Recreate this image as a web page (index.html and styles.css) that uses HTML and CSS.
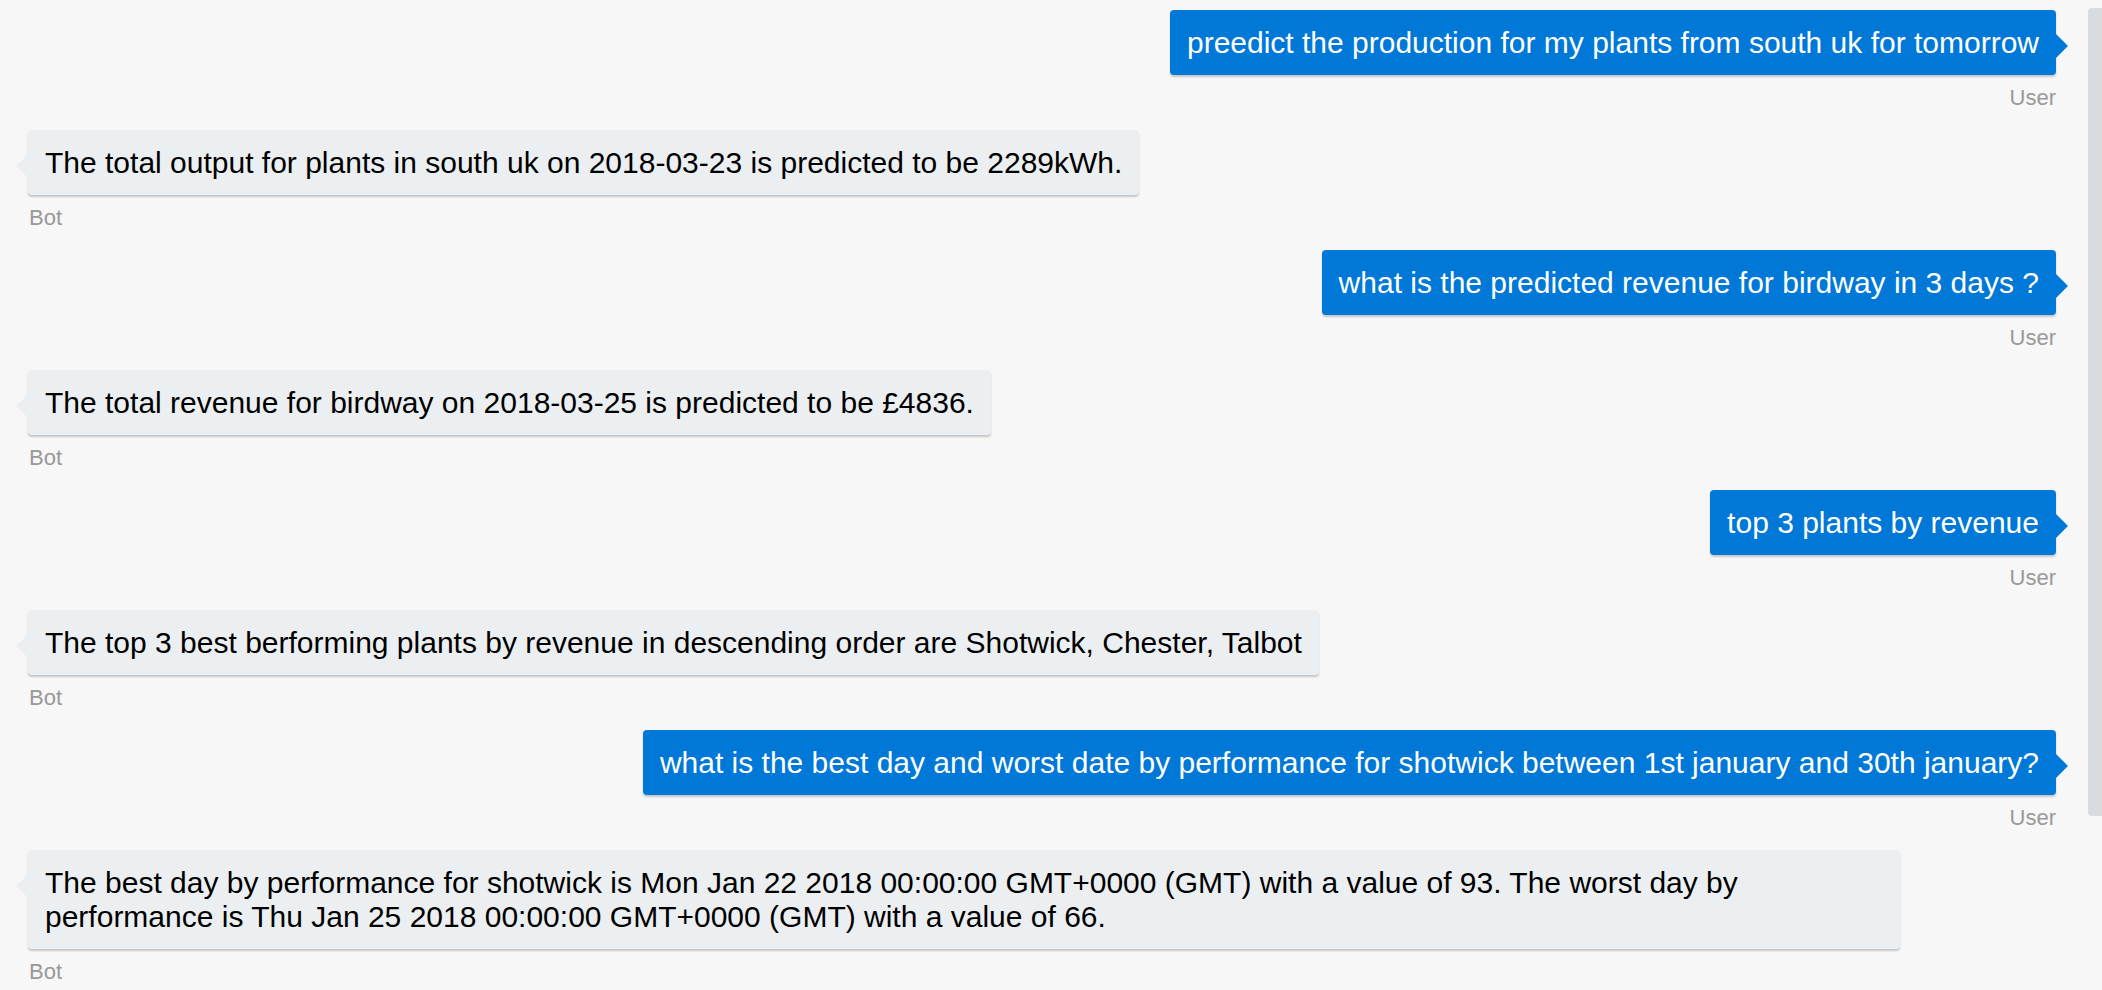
FILE: index.html
```html
<!DOCTYPE html>
<html lang="en">
<head>
<meta charset="utf-8">
<title>Chat</title>
<link rel="stylesheet" href="styles.css">
</head>
<body>
<div class="app">
  <div class="chat">
    <div class="msg msg-user">
      <div class="bubble-wrap"><div class="bubble">preedict the production for my plants from south uk for tomorrow</div></div>
      <div class="from">User</div>
    </div>
    <div class="msg msg-bot">
      <div class="bubble-wrap"><div class="bubble">The total output for plants in south uk on 2018-03-23 is predicted to be 2289kWh.</div></div>
      <div class="from">Bot</div>
    </div>
    <div class="msg msg-user">
      <div class="bubble-wrap"><div class="bubble">what is the predicted revenue for birdway in 3 days ?</div></div>
      <div class="from">User</div>
    </div>
    <div class="msg msg-bot">
      <div class="bubble-wrap"><div class="bubble">The total revenue for birdway on 2018-03-25 is predicted to be £4836.</div></div>
      <div class="from">Bot</div>
    </div>
    <div class="msg msg-user">
      <div class="bubble-wrap"><div class="bubble">top 3 plants by revenue</div></div>
      <div class="from">User</div>
    </div>
    <div class="msg msg-bot">
      <div class="bubble-wrap"><div class="bubble">The top 3 best berforming plants by revenue in descending order are Shotwick, Chester, Talbot</div></div>
      <div class="from">Bot</div>
    </div>
    <div class="msg msg-user">
      <div class="bubble-wrap"><div class="bubble">what is the best day and worst date by performance for shotwick between 1st january and 30th january?</div></div>
      <div class="from">User</div>
    </div>
    <div class="msg msg-bot">
      <div class="bubble-wrap"><div class="bubble">The best day by performance for shotwick is Mon Jan 22 2018 00:00:00 GMT+0000 (GMT) with a value of 93. The worst day by performance is Thu Jan 25 2018 00:00:00 GMT+0000 (GMT) with a value of 66.</div></div>
      <div class="from">Bot</div>
    </div>
  </div>
  <div class="scroll-track"><div class="scroll-thumb"></div></div>
</div>
</body>
</html>
```

FILE: styles.css
```css
html, body {
  margin: 0;
  padding: 0;
  height: 100%;
  overflow: hidden;
  background: #f7f7f7;
}

body {
  font-family: "Liberation Sans", Arial, Helvetica, sans-serif;
}

.app {
  display: flex;
  height: 990px;
}

.chat {
  flex: 1;
  min-width: 0;
  padding: 10px 20px 0 16px;
  display: flex;
  flex-direction: column;
}

.msg {
  display: flex;
  flex-direction: column;
  margin-bottom: 20px;
}

.msg-user {
  align-items: flex-end;
}

.msg-bot {
  align-items: flex-start;
}

.bubble-wrap {
  position: relative;
  max-width: 91.8%;
  box-sizing: border-box;
}

.msg-user .bubble-wrap {
  padding-right: 12px;
}

.msg-bot .bubble-wrap {
  padding-left: 12px;
}

.bubble {
  font-size: 30px;
  line-height: 34px;
  padding: 16px 17px 15px;
  border-radius: 4px;
  box-shadow: 0 2px 2px rgba(0, 0, 0, 0.2);
}

.msg-user .bubble {
  background: #0078d7;
  color: #ffffff;
}

.msg-bot .bubble {
  background: #eceff1;
  color: #000000;
}

.bubble-wrap::before {
  content: "";
  position: absolute;
  top: 24px;
  width: 0;
  height: 0;
  border-top: 12px solid transparent;
  border-bottom: 12px solid transparent;
}

.msg-user .bubble-wrap::before {
  right: 0;
  border-left: 12px solid #0078d7;
}

.msg-bot .bubble-wrap::before {
  left: 0;
  border-right: 12px solid #eceff1;
}

.from {
  margin-top: 10px;
  font-size: 22px;
  line-height: 25px;
  color: #999999;
}

.msg-user .from {
  padding-right: 12px;
}

.msg-bot .from {
  padding-left: 13px;
}

.scroll-track {
  width: 14px;
  flex: none;
  padding-top: 8px;
}

.scroll-thumb {
  height: 808px;
  background: #d8dcdf;
  border-radius: 4px 0 0 4px;
}
```
